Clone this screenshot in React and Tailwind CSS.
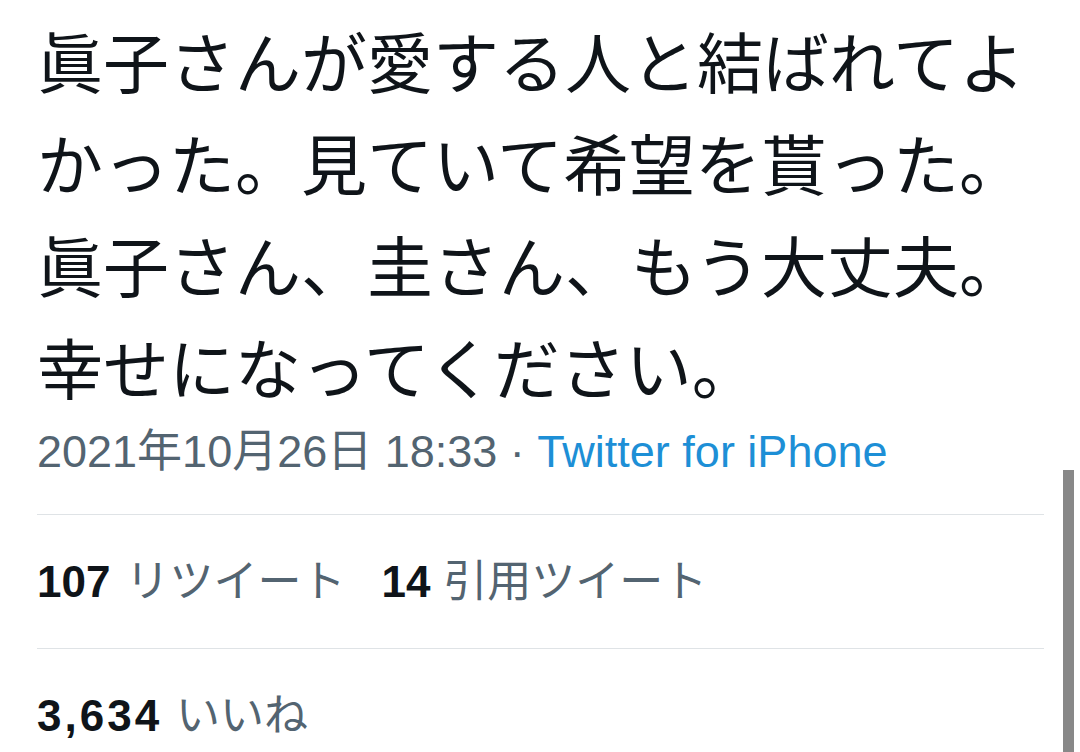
export default function App() {
  const lines = [
    "眞子さんが愛する人と結ばれてよ",
    "かった。見ていて希望を貰った。",
    "眞子さん、圭さん、もう大丈夫。",
    "幸せになってください。",
  ];
  return (
    <div className="relative w-[1080px] h-[752px] overflow-hidden bg-white">
      <div className="pl-[37px] pr-[36px] pt-[8px]">
        <div className="text-[66px] leading-[102px] text-[#0f1419] font-['Noto_Sans_CJK_JP',sans-serif]">
          {lines.map((l) => (
            <div key={l} className="whitespace-nowrap">{l}</div>
          ))}
        </div>
        <div className="mt-[8px] text-[45px] leading-[56px] text-[#536471] whitespace-nowrap font-['Liberation_Sans','Noto_Sans_CJK_JP',sans-serif]">
          2021年10月26日 18:33 · <span className="text-[#1d8fd6]">Twitter for iPhone</span>
        </div>
        <div className="mt-[34px] border-t border-[#dfe3e6]" />
        <div className="h-[133px] flex items-center gap-[36px] whitespace-nowrap font-['Liberation_Sans','Noto_Sans_CJK_JP',sans-serif]">
          <div className="flex items-center gap-[15px]">
            <span className="text-[44px] font-bold text-[#0f1419]">107</span>
            <span className="text-[44px] text-[#536471]">リツイート</span>
          </div>
          <div className="flex items-center gap-[13px]">
            <span className="text-[44px] font-bold text-[#0f1419]">14</span>
            <span className="text-[44px] text-[#536471]">引用ツイート</span>
          </div>
        </div>
        <div className="border-t border-[#dfe3e6]" />
        <div className="h-[133px] flex items-center gap-[14px] whitespace-nowrap font-['Liberation_Sans','Noto_Sans_CJK_JP',sans-serif]">
          <span className="text-[44px] font-bold tracking-[3px] text-[#0f1419]">3,634</span>
          <span className="text-[44px] text-[#536471]">いいね</span>
        </div>
      </div>
      <div className="absolute right-[6px] top-[470px] bottom-0 w-[11px] bg-[#888888]" />
    </div>
  );
}
